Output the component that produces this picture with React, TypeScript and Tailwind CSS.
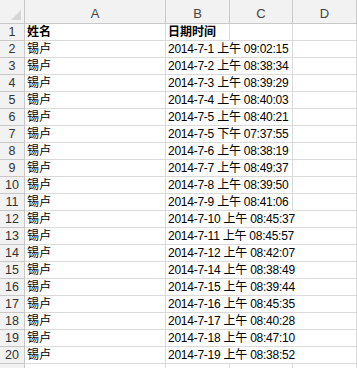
import React from "react";

const rows = [
    ["2014-7-1", "上午", "09:02:15"],
    ["2014-7-2", "上午", "08:38:34"],
    ["2014-7-3", "上午", "08:39:29"],
    ["2014-7-4", "上午", "08:40:03"],
    ["2014-7-5", "上午", "08:40:21"],
    ["2014-7-5", "下午", "07:37:55"],
    ["2014-7-6", "上午", "08:38:19"],
    ["2014-7-7", "上午", "08:49:37"],
    ["2014-7-8", "上午", "08:39:50"],
    ["2014-7-9", "上午", "08:41:06"],
    ["2014-7-10", "上午", "08:45:37"],
    ["2014-7-11", "上午", "08:45:57"],
    ["2014-7-12", "上午", "08:42:07"],
    ["2014-7-14", "上午", "08:38:49"],
    ["2014-7-15", "上午", "08:39:44"],
    ["2014-7-16", "上午", "08:45:35"],
    ["2014-7-17", "上午", "08:40:28"],
    ["2014-7-18", "上午", "08:47:10"],
    ["2014-7-19", "上午", "08:38:52"],
];

const cell = "h-full shrink-0 border-r border-b border-[#dadada] px-[2px] leading-[16px] whitespace-nowrap";
const rowHead = "h-full w-[25px] shrink-0 border-r border-b border-[#c8c8c8] bg-[#f2f2f2] text-center text-[12.5px] leading-[16px] text-[#333]";

export default function App() {
    return (
        <div className="h-[368px] w-[357px] overflow-hidden bg-white font-['Liberation_Sans','Noto_Sans_CJK_SC',sans-serif] text-[12px] text-black">
            {/* column headers */}
            <div className="flex h-[24px]">
                <div className="relative h-full w-[25px] shrink-0 border-r border-b border-[#c8c8c8] bg-[#f2f2f2]">
                    <div className="absolute bottom-[3px] right-[3px] h-0 w-0 border-l-[10px] border-t-[10px] border-l-transparent border-t-transparent border-b-0 border-r-[10px] border-r-[#d6d6d6] border-b-transparent" />
                </div>
                {[
                    ["A", "w-[141px]"],
                    ["B", "w-[64px]"],
                    ["C", "w-[63px]"],
                    ["D", "w-[64px]"],
                ].map(([l, w]) => (
                    <div
                        key={l}
                        className={`${w} h-full shrink-0 border-r border-b border-[#c8c8c8] bg-[#f2f2f2] pt-[4px] text-center text-[13px] text-[#444]`}
                    >
                        {l}
                    </div>
                ))}
            </div>

            {/* row 1 */}
            <div className="flex h-[17px]">
                <div className={rowHead}>1</div>
                <div className={`${cell} w-[141px] font-bold`}>姓名</div>
                <div className={`${cell} w-[64px] font-bold`}>日期时间</div>
                <div className={`${cell} w-[63px]`} />
                <div className={`${cell} w-[64px]`} />
            </div>

            {rows.map(([d, ap, t], i) => {
                const long = d.length > 8;
                return (
                    <div key={i} className="flex h-[17px]">
                        <div className={rowHead}>{i + 2}</div>
                        <div className={`${cell} w-[141px]`}>锡卢</div>
                        {long ? (
                            <div className={`${cell} w-[191px] tracking-[-0.25px]`}>
                                {d} {ap} {t}
                            </div>
                        ) : (
                            <>
                                <div className={`${cell} w-[127px] tracking-[-0.25px]`}>
                                    {d} {ap} {t}
                                </div>
                                <div className={`${cell} w-[64px]`} />
                            </>
                        )}
                    </div>
                );
            })}

            {/* partial row 21 */}
            <div className="flex h-[17px]">
                <div className={rowHead} />
                <div className={`${cell} w-[141px]`} />
                <div className={`${cell} w-[64px]`} />
                <div className={`${cell} w-[63px]`} />
                <div className={`${cell} w-[64px]`} />
            </div>
        </div>
    );
}
